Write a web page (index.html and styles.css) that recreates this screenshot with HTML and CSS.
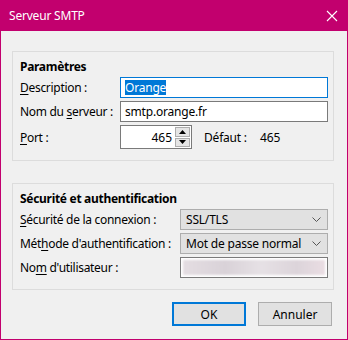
FILE: index.html
```html
<!DOCTYPE html>
<html lang="fr">
<head>
<meta charset="utf-8">
<link rel="stylesheet" href="styles.css">
</head>
<body>
<div class="window">
  <div class="titlebar">
    <span class="title">Serveur SMTP</span>
    <svg class="close" width="12" height="12" viewBox="0 0 12 12"><path d="M1 1 L11 11 M11 1 L1 11" stroke="#fff" stroke-width="1.1" fill="none"/></svg>
  </div>
  <div class="content">
    <div class="group g1">
      <div class="heading">Paramètres</div>
      <div class="grid grid1">
        <label class="lbl"><u>D</u>escription :</label>
        <div class="field focus"><span class="sel">Orange</span></div>
        <label class="lbl">Nom du <u>s</u>erveur :</label>
        <div class="field">smtp.orange.fr</div>
        <label class="lbl"><u>P</u>ort :</label>
        <div class="portrow">
          <div class="port">
            <span class="portval">465</span>
            <div class="spin">
              <div class="spinbtn"><svg width="7" height="4" viewBox="0 0 7 4"><path d="M0 4 L3.5 0 L7 4Z" fill="#000"/></svg></div>
              <div class="spinbtn"><svg width="7" height="4" viewBox="0 0 7 4"><path d="M0 0 L3.5 4 L7 0Z" fill="#000"/></svg></div>
            </div>
          </div>
          <span class="def">Défaut :</span>
          <span class="defval">465</span>
        </div>
      </div>
    </div>
    <div class="group g2">
      <div class="heading">Sécurité et authentification</div>
      <div class="grid grid2">
        <label class="lbl"><u>S</u>écurité de la connexion :</label>
        <div class="select"><span>SSL/TLS</span><svg width="9" height="5" viewBox="0 0 9 5"><path d="M0.5 0.5 L4.5 4.5 L8.5 0.5" stroke="#555" stroke-width="1" fill="none"/></svg></div>
        <label class="lbl">Mét<u>h</u>ode d'authentification :</label>
        <div class="select"><span>Mot de passe normal</span><svg width="9" height="5" viewBox="0 0 9 5"><path d="M0.5 0.5 L4.5 4.5 L8.5 0.5" stroke="#555" stroke-width="1" fill="none"/></svg></div>
        <label class="lbl">No<u>m</u> d'utilisateur :</label>
        <div class="field blurred"><div class="blur"></div></div>
      </div>
    </div>
    <div class="buttons">
      <button class="btn default">OK</button>
      <button class="btn">Annuler</button>
    </div>
  </div>
</div>
</body>
</html>
```
FILE: styles.css
```css
html, body {
  margin: 0;
  padding: 0;
}
body {
  width: 348px;
  height: 340px;
  overflow: hidden;
  font-family: "Noto Sans", "Open Sans", sans-serif;
  font-size: 12px;
  color: #000;
}
.window {
  width: 348px;
  height: 340px;
  box-sizing: border-box;
  background: #f0f0f0;
  border: 1px solid #c2006e;
  border-top: none;
  display: flex;
  flex-direction: column;
}
.titlebar {
  height: 31px;
  margin: 0 -1px;
  background: #c2006e;
  display: flex;
  align-items: center;
  justify-content: space-between;
  padding: 0 10px 0 9px;
  color: #fff;
}
.title {
  font-size: 12px;
  letter-spacing: -0.2px;
}
.close {
  margin-top: 1px;
}
.content {
  padding: 20px 0 0 11px;
}
.group {
  width: 322px;
  box-sizing: border-box;
  border: 1px solid #dcdcdc;
  padding: 7px 4px 0 7px;
}
.g1 {
  height: 110px;
}
.g2 {
  height: 107px;
  margin-top: 22px;
}
.heading {
  font-weight: bold;
  line-height: 16px;
  letter-spacing: -0.3px;
  margin-bottom: 2px;
}
.grid {
  display: grid;
  row-gap: 3px;
  align-items: center;
}
.grid1 {
  grid-template-columns: 100px 208px;
  grid-template-rows: 21px 21px 24px;
}
.grid2 {
  grid-template-columns: 160px 148px;
  grid-template-rows: 21px 21px 21px;
}
.lbl {
  letter-spacing: -0.3px;
  white-space: nowrap;
}
.lbl u {
  text-underline-offset: 2px;
}
.field {
  height: 21px;
  box-sizing: border-box;
  background: #fff;
  border: 1px solid #7a7a7a;
  padding: 0 4px;
  display: flex;
  align-items: center;
  letter-spacing: -0.2px;
}
.field.focus {
  border-color: #0078d7;
}
.sel {
  background: #0078d7;
  color: #fff;
  line-height: 15px;
}
.portrow {
  display: flex;
  align-items: center;
}
.port {
  width: 72px;
  height: 24px;
  box-sizing: border-box;
  background: #fff;
  border: 1px solid #7a7a7a;
  display: flex;
  align-items: center;
  justify-content: flex-end;
  padding: 1px;
}
.portval {
  margin-right: 3px;
}
.spin {
  width: 15px;
  height: 20px;
  display: flex;
  flex-direction: column;
  gap: 1px;
}
.spinbtn {
  flex: 1;
  background: #e5e5e5;
  border: 1px solid #adadad;
  display: flex;
  align-items: center;
  justify-content: center;
}
.def {
  margin-left: 12px;
  letter-spacing: -0.2px;
}
.defval {
  margin-left: 13px;
}
.select {
  height: 21px;
  box-sizing: border-box;
  background: #e1e1e1;
  border: 1px solid #adadad;
  display: flex;
  align-items: center;
  justify-content: space-between;
  padding: 0 6px 0 5px;
  letter-spacing: -0.2px;
}
.blurred {
  padding: 2px;
}
.blur {
  width: 100%;
  height: 100%;
  background: linear-gradient(90deg, #e4dde2 0%, #d9d2d8 30%, #e6e1e5 55%, #dcd4da 80%, #eadde3 100%);
  filter: blur(1px);
}
.buttons {
  display: flex;
  justify-content: flex-end;
  gap: 12px;
  width: 320px;
  margin-top: 12px;
}
.btn {
  width: 74px;
  height: 24px;
  box-sizing: border-box;
  font-family: inherit;
  font-size: 12px;
  background: #e1e1e1;
  border: 1px solid #adadad;
  padding: 0;
  color: #000;
}
.btn.default {
  border: 2px solid #0078d7;
}
```
